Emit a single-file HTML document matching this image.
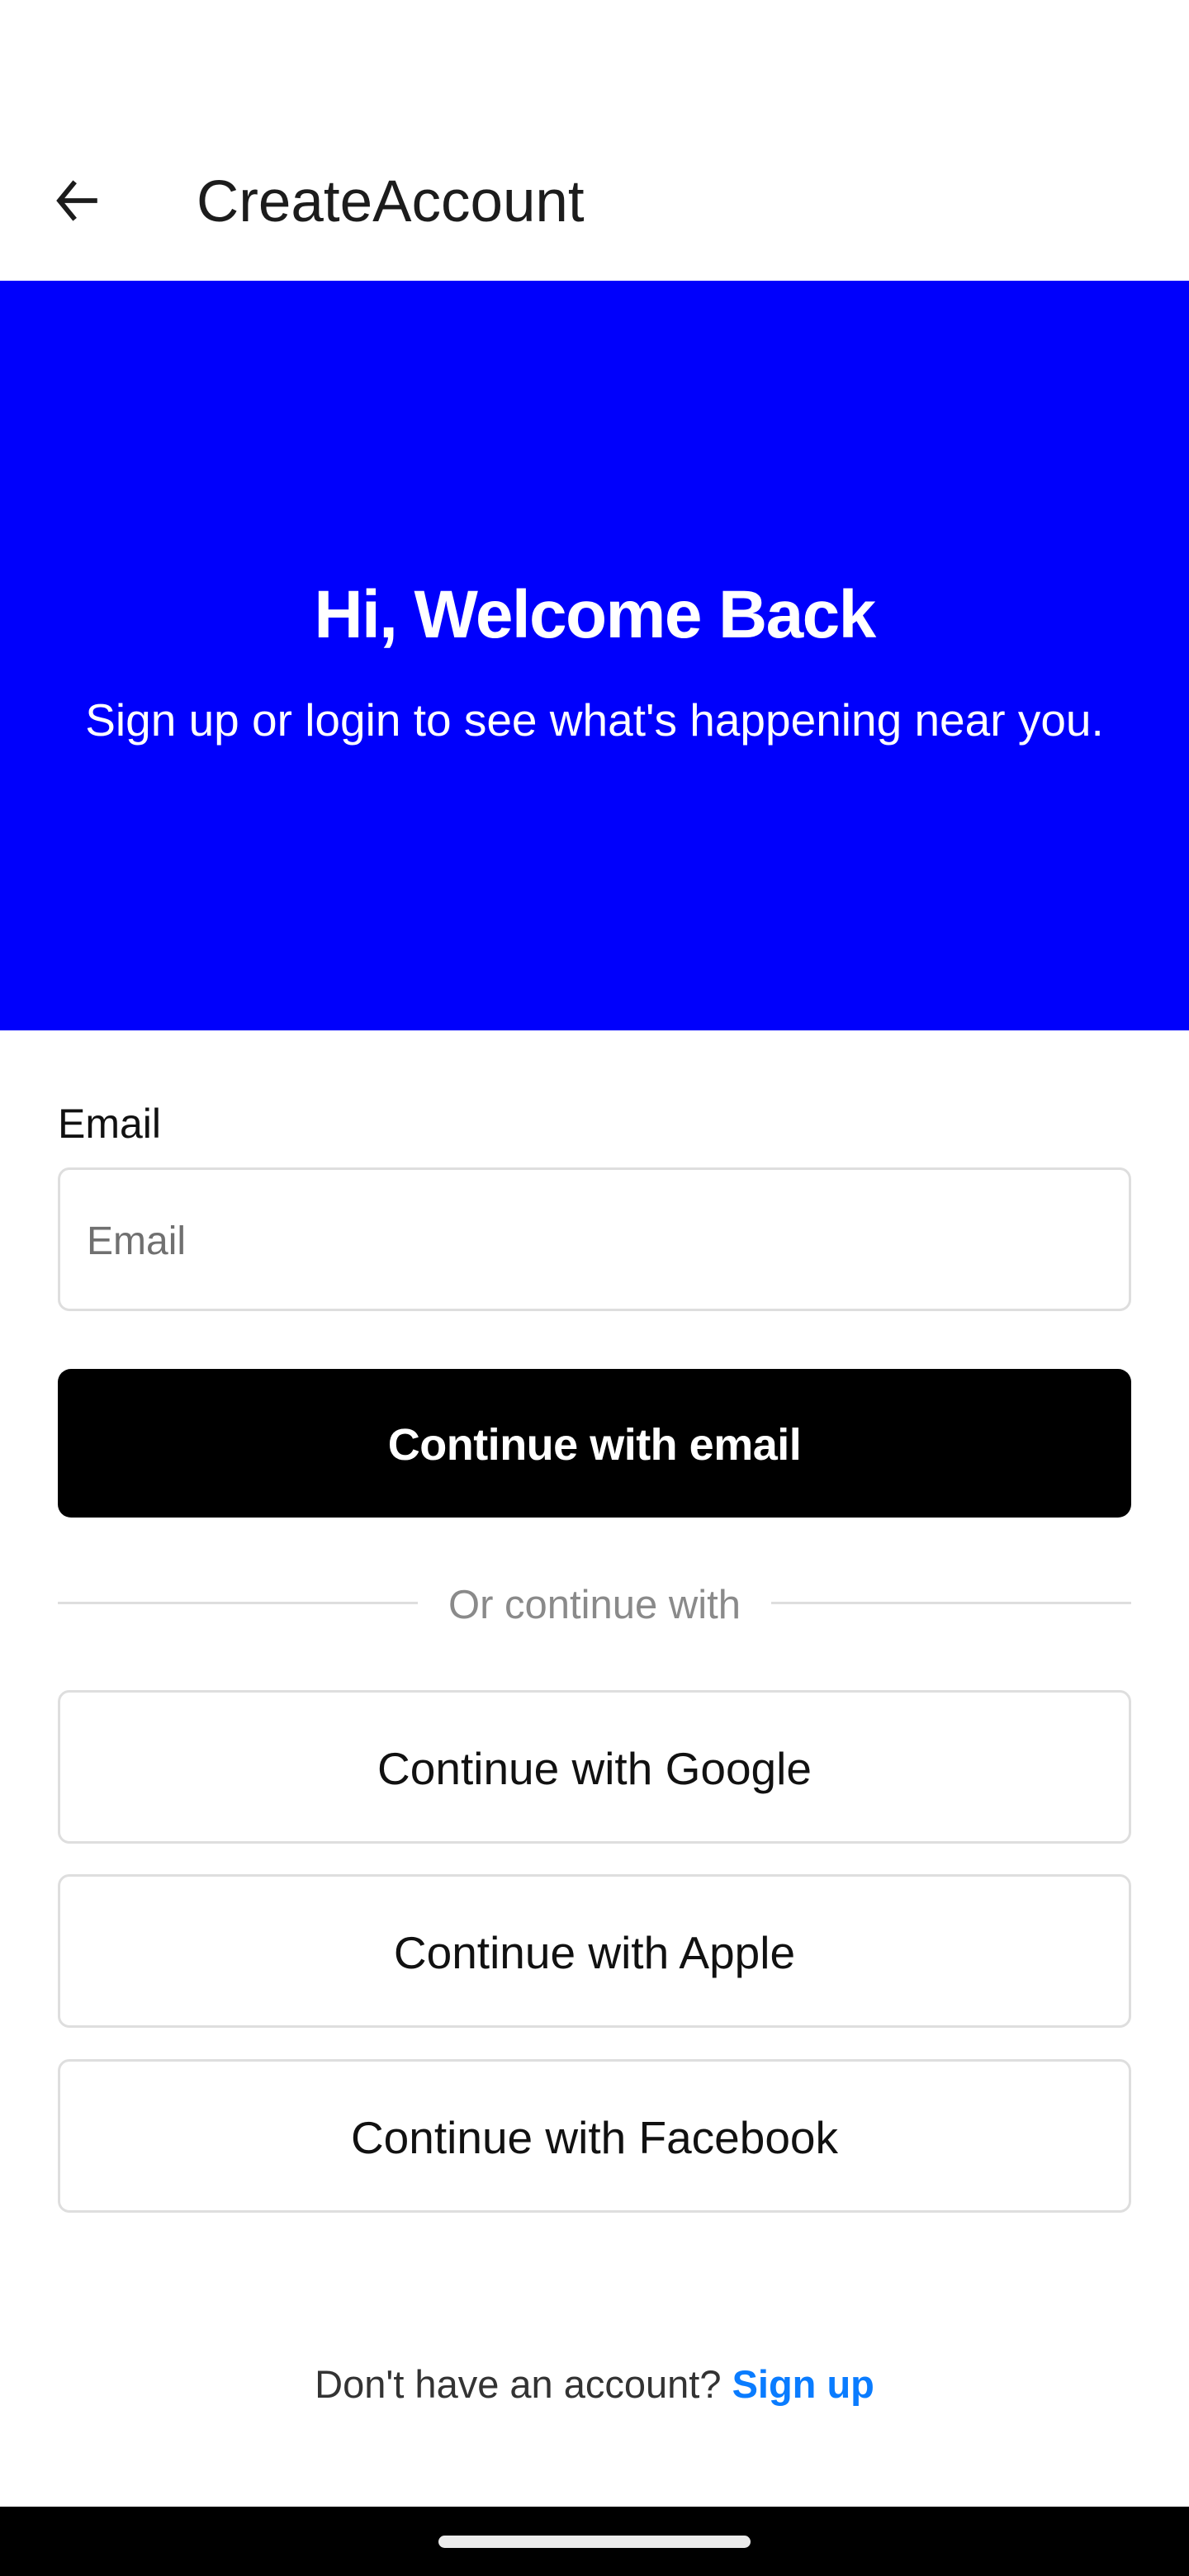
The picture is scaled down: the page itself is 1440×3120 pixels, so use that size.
<!DOCTYPE html>
<html><head><meta charset="utf-8"><style>
*{margin:0;padding:0;box-sizing:border-box}
body{width:1440px;height:3120px;background:#fff;font-family:"Liberation Sans",Arial,sans-serif;position:relative;overflow:hidden;color:#111}
.abs{position:absolute}
.c{left:0;width:1440px;text-align:center;white-space:nowrap}
.btn{position:absolute;left:70px;width:1300px;border:3px solid #dedede;border-radius:14px;display:flex;align-items:center;justify-content:center;font-size:55px;color:#111;letter-spacing:0;padding-top:4px}
</style></head><body>
<svg class="abs" style="left:58px;top:208px" width="70" height="70" viewBox="0 0 24 24"><path d="M20.5 12H4.5M11.2 4.2 4.8 12l6.4 7.8" fill="none" stroke="#1c1c1c" stroke-width="2"/></svg>
<div class="abs" style="left:238px;top:205px;font-size:71px;line-height:80px;color:#1c1c1c">CreateAccount</div>
<div class="abs" style="left:0;top:340px;width:1440px;height:908px;background:#0000fc"></div>
<div class="abs c" style="top:697px;font-size:82px;line-height:96px;font-weight:bold;color:#fff;letter-spacing:-1.6px">Hi, Welcome Back</div>
<div class="abs c" style="top:840px;font-size:55px;line-height:64px;color:#fff;letter-spacing:0">Sign up or login to see what's happening near you.</div>
<div class="abs" style="left:70px;top:1331px;font-size:50px;line-height:60px;color:#111">Email</div>
<div class="abs" style="left:70px;top:1414px;width:1300px;height:174px;border:3px solid #dedede;border-radius:14px"></div>
<div class="abs" style="left:105px;top:1474px;font-size:48px;line-height:60px;color:#707070">Email</div>
<div class="abs" style="left:70px;top:1658px;width:1300px;height:180px;background:#000;border-radius:16px;display:flex;align-items:center;justify-content:center;color:#fff;font-weight:bold;font-size:54px;letter-spacing:-0.5px;padding-top:4px">Continue with email</div>
<div class="abs" style="left:70px;top:1940px;width:436px;height:3px;background:#dedede"></div>
<div class="abs" style="left:934px;top:1940px;width:436px;height:3px;background:#dedede"></div>
<div class="abs c" style="top:1914px;font-size:49px;line-height:60px;color:#8a8a8a;letter-spacing:0">Or continue with</div>
<div class="btn" style="top:2047px;height:186px">Continue with Google</div>
<div class="btn" style="top:2270px;height:186px">Continue with Apple</div>
<div class="btn" style="top:2494px;height:186px">Continue with Facebook</div>
<div class="abs c" style="top:2860px;font-size:47px;line-height:56px;color:#333;letter-spacing:0">Don't have an account? <b style="color:#0a7cff">Sign up</b></div>
<div class="abs" style="left:0;top:3036px;width:1440px;height:84px;background:#000"></div>
<div class="abs" style="left:531px;top:3071px;width:378px;height:15px;background:#ebebeb;border-radius:8px"></div>
</body></html>
